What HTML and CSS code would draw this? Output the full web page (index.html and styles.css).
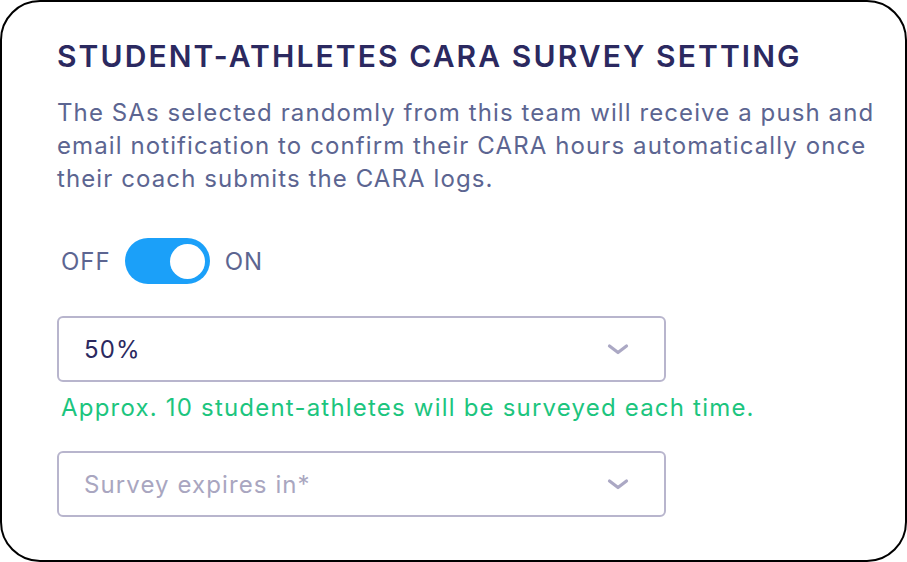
FILE: index.html
```html
<!DOCTYPE html>
<html lang="en">
<head>
  <meta charset="UTF-8">
  <meta name="viewport" content="width=device-width, initial-scale=1.0">
  <title>Student-Athletes CARA Survey Setting</title>
  <link rel="stylesheet" href="styles.css">
</head>
<body>
  <div class="card">
    <h2 class="title">STUDENT-ATHLETES CARA SURVEY SETTING</h2>
    <p class="desc">The SAs selected randomly from this team will receive a push and email notification to confirm their CARA hours automatically once their coach submits the CARA logs.</p>

    <!-- On / off switch -->
    <div class="toggle-row">
      <span class="toggle-label">OFF</span>
      <div class="switch on"><div class="knob"></div></div>
      <span class="toggle-label">ON</span>
    </div>

    <div class="select first">
      <span class="value">50%</span>
      <svg class="chevron" width="24" height="14" viewBox="0 0 24 14"><path d="M3.5 4 L12 10.5 L20.5 4" fill="none" stroke="#aba8c4" stroke-width="3.2" stroke-linecap="round" stroke-linejoin="round"/></svg>
    </div>
    <p class="hint">Approx. 10 student-athletes will be surveyed each time.</p>

    <div class="select">
      <span class="placeholder">Survey expires in*</span>
      <svg class="chevron" width="24" height="14" viewBox="0 0 24 14"><path d="M3.5 4 L12 10.5 L20.5 4" fill="none" stroke="#aba8c4" stroke-width="3.2" stroke-linecap="round" stroke-linejoin="round"/></svg>
    </div>
  </div>
</body>
</html>
```

FILE: styles.css
```css
body {
  margin: 0;
  background-color: #ffffff;
  font-family: Inter, "Noto Sans", Arial, sans-serif;
}

.card {
  box-sizing: border-box;
  width: 907px;
  height: 562px;
  border: 2px solid #000;
  border-radius: 40px;
  padding: 34px 30px 0 55px;
}

.title {
  margin: 0;
  font-size: 30px;
  font-weight: 600;
  letter-spacing: 2.1px;
  color: #2b2960;
  line-height: 40px;
}

.desc {
  margin: 20px 0 0 0;
  font-size: 24px;
  letter-spacing: 1.1px;
  line-height: 33px;
  color: #5c6591;
}

.toggle-row {
  display: flex;
  align-items: center;
  margin-top: 43px;
  padding-left: 4px;
}

.toggle-label {
  font-size: 24px;
  letter-spacing: 1px;
  color: #5c6591;
}

.switch {
  box-sizing: border-box;
  width: 85px;
  height: 46px;
  border-radius: 23px;
  background-color: #1ba0f9;
  margin: 0 15px 0 14px;
  padding: 0 5px;
  display: flex;
  align-items: center;
  justify-content: flex-end;
}

.knob {
  width: 35px;
  height: 35px;
  border-radius: 50%;
  background-color: #fff;
}

.select {
  box-sizing: border-box;
  width: 609px;
  height: 66px;
  border: 2px solid #b8b5cd;
  border-radius: 6px;
  display: flex;
  align-items: center;
  justify-content: space-between;
  padding: 0 34px 0 25px;
  font-size: 24px;
  letter-spacing: 1.1px;
}

.select.first {
  margin-top: 32px;
}

.select .value {
  color: #2b2960;
}

.select .placeholder {
  color: #a9a6c0;
}

.hint {
  margin: 11px 0 28px 4px;
  font-size: 24px;
  line-height: 30px;
  letter-spacing: 1.2px;
  color: #1cc57e;
}
```
